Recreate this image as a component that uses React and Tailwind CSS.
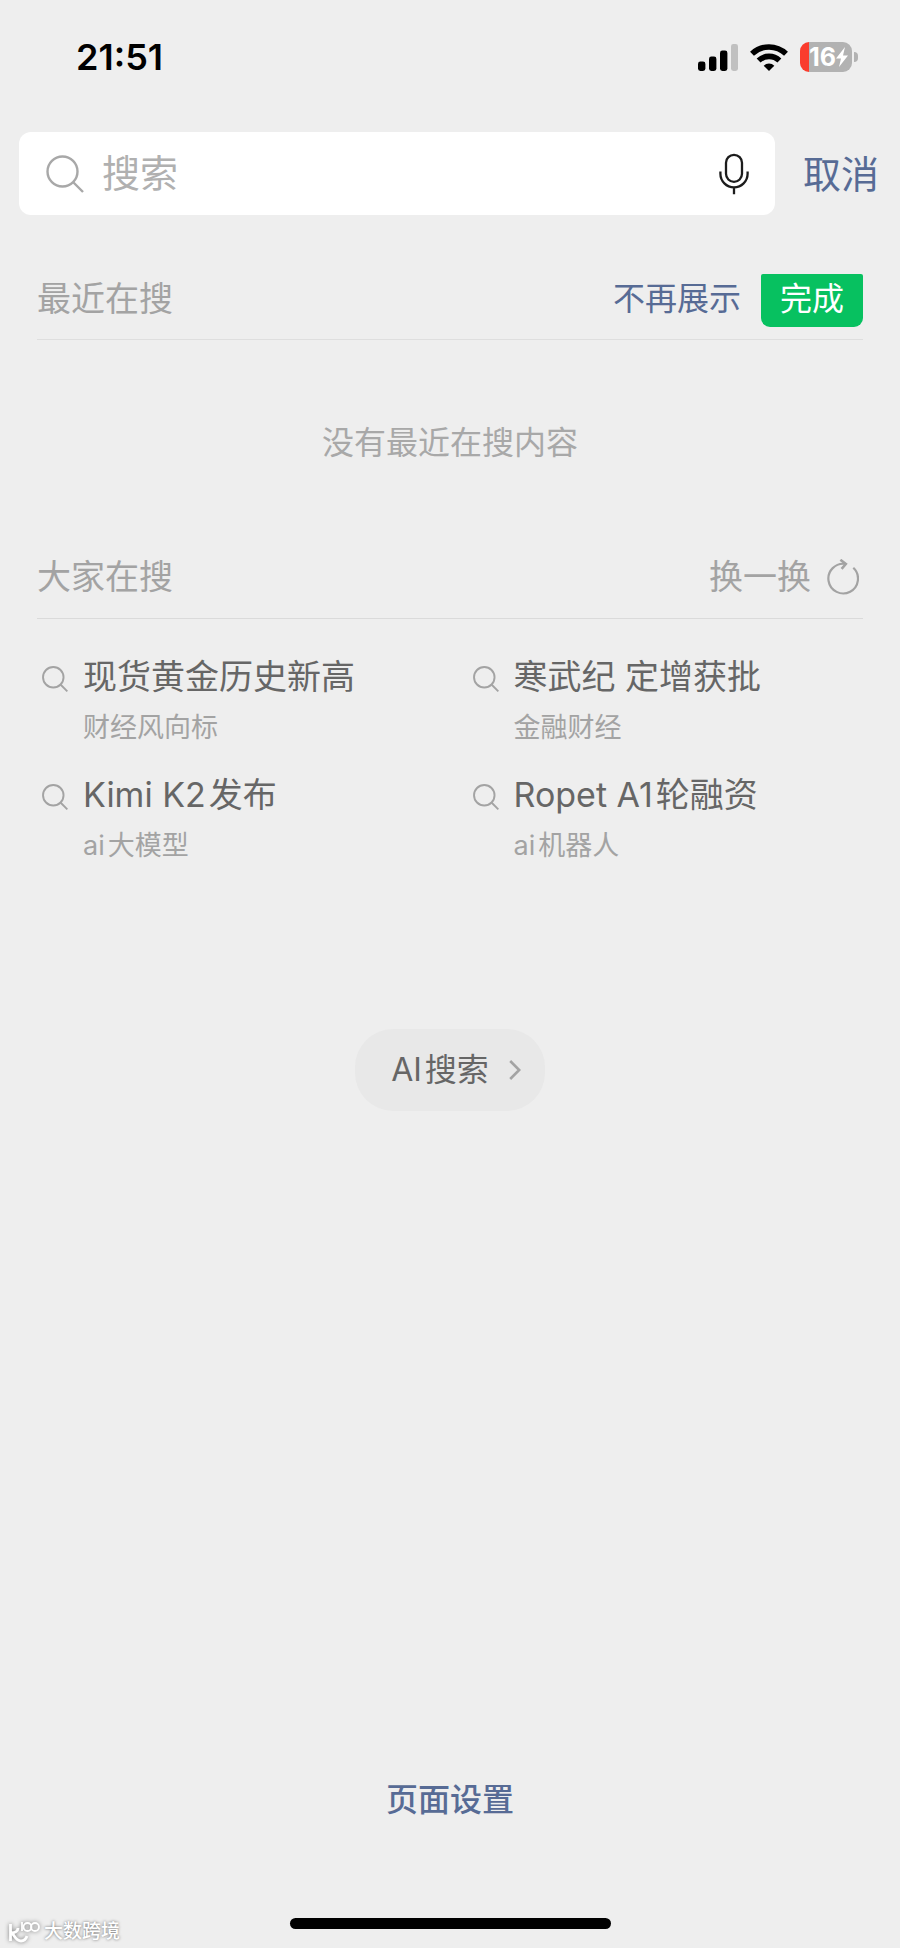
const trending = [
  { title: [['', '现货黄金历史新高']], tag: [['', '财经风向标']] },
  { title: [['', '寒武纪 定增获批']], tag: [['', '金融财经']] },
  { title: [['Kimi K2', '发布']], tag: [['ai', '大模型']] },
  { title: [['Ropet A1', '轮融资']], tag: [['ai', '机器人']] },
]

function Mixed({ parts }) {
  return parts.map(([latin, han]) => (
    <span key={han}>
      {latin && <span className="mr-[3px]">{latin}</span>}
      {han}
    </span>
  ))
}

function SearchIcon({ className, strokeWidth }) {
  return (
    <svg className={className} viewBox="0 0 38 38" fill="none" stroke="currentColor" strokeWidth={strokeWidth} aria-hidden="true">
      <circle cx="16.5" cy="16.5" r="15" />
      <path d="M27 27l10 10" />
    </svg>
  )
}

function StatusBar() {
  return (
    <div className="flex items-center justify-between pt-9 pl-[76px] pr-[42px]">
      <time className="text-[36px] leading-[42px] font-semibold text-black">21:51</time>
      <div className="flex items-center gap-3">
        <svg className="w-10 h-[27px]" viewBox="0 0 40 27" aria-hidden="true">
          <rect x="0" y="17.5" width="7.4" height="9.5" rx="2.4" />
          <rect x="11" y="12.5" width="7.4" height="14.5" rx="2.4" />
          <rect x="22" y="6.5" width="7.4" height="20.5" rx="2.4" />
          <rect x="33" y="0" width="7" height="27" rx="2.4" fill="#c0c0c0" />
        </svg>
        <svg className="w-[38px] h-[27px]" viewBox="0 0 38 27" fill="none" stroke="#000" strokeWidth="5.6" aria-hidden="true">
          <path d="M2 9.8a24.6 24.6 0 0 1 34 0" />
          <path d="M8.6 16.6a15 15 0 0 1 20.8 0" />
          <path d="M19 27l-5.3-5.3a7.6 7.6 0 0 1 10.6 0z" fill="#000" stroke="none" />
        </svg>
        <div className="flex items-center gap-[2px]">
          <div className="flex items-center justify-end w-[52px] h-[30px] pr-1 rounded-[9px] bg-linear-to-r from-[#fa3c2d] from-17% to-[#b2b2b2] to-17% text-white">
            <span className="text-[25px] leading-[30px] font-bold">16</span>
            <svg className="w-3 h-5" viewBox="0 0 12 20" fill="currentColor" aria-hidden="true">
              <path d="M9 0L0 11.4h5L3 20 12 8.4H7z" />
            </svg>
          </div>
          <span className="w-1 h-[10px] rounded-r-full bg-[#b2b2b2]" />
        </div>
      </div>
    </div>
  )
}

function SearchBar() {
  return (
    <form className="flex items-center gap-7 mt-[54px] pl-[19px] pr-[21px]" onSubmit={(e) => e.preventDefault()}>
      <div className="flex flex-1 items-center h-[83px] pl-[27px] pr-[26px] rounded-[12px] bg-white">
        <SearchIcon className="w-[38px] h-[38px] shrink-0 text-[#a8a8a8]" strokeWidth="2.4" />
        <input
          type="text"
          aria-label="搜索"
          placeholder="搜索"
          className="flex-1 min-w-0 h-[56px] ml-[18px] text-[38px] text-[#333] placeholder:text-[#b0b0b0] outline-none bg-transparent"
        />
        <button type="button" aria-label="语音输入">
          <svg className="w-[30px] h-[42px]" viewBox="0 0 30 42" fill="none" stroke="#1c1c1c" strokeWidth="2.3" aria-hidden="true">
            <rect x="7" y="1.8" width="16" height="27" rx="8" />
            <path d="M1.4 18.5v2.2a13.6 13.6 0 0 0 27.2 0v-2.2M15 34.3v7" />
          </svg>
        </button>
      </div>
      <button type="button" className="text-[38px] leading-[56px] text-[#576b95]">取消</button>
    </form>
  )
}

export default function App() {
  return (
    <main className="relative flex flex-col min-h-screen bg-[#eeeeee] font-['Inter','Noto_Sans_CJK_SC',sans-serif]">
      <StatusBar />
      <SearchBar />

      <section className="mt-[59px] mx-[37px]">
        <header className="flex items-start justify-between h-[66px] border-b border-[#dedede]">
          <h2 className="text-[34px] leading-[50px] text-[#a3a3a3]">最近在搜</h2>
          <div className="flex items-start gap-5 text-[32px] leading-[49px]">
            <button type="button" className="text-[#576b95]">不再展示</button>
            <button type="button" className="h-[53px] pb-1 px-[19px] rounded-t-[2px] rounded-b-[9px] bg-[#07c160] text-white">完成</button>
          </div>
        </header>
        <p className="mt-[79px] text-center text-[32px] leading-[48px] text-[#a8a8a8]">没有最近在搜内容</p>
      </section>

      <section className="mt-[85px] mx-[37px]">
        <header className="flex items-start justify-between h-[67px] border-b border-[#dadada]">
          <h2 className="text-[34px] leading-[50px] text-[#a3a3a3]">大家在搜</h2>
          <button type="button" className="flex items-center gap-4 pr-1 text-[34px] leading-[50px] text-[#a3a3a3]">
            换一换
            <svg className="w-8 h-9" viewBox="0 0 32 36" fill="none" stroke="currentColor" strokeWidth="2.2" aria-hidden="true">
              <path d="M26.3 8.8A14.8 14.8 0 1 1 18.6 5" />
              <path d="M13.4 0.8l5.4 4.2-4.2 4.8" strokeWidth="2.6" />
            </svg>
          </button>
        </header>
        <ul className="grid grid-cols-2 gap-x-10 gap-y-4 mt-[32px] pl-[5px]">
          {trending.map((item, i) => (
            <li key={i}>
              <a href="#" className="flex gap-[15px]">
                <SearchIcon className="w-[26px] h-[26px] mt-[15px] shrink-0 text-[#a3a3a3]" strokeWidth="2.8" />
                <span className="flex flex-col">
                  <span className="h-[52px] text-[34px] leading-[52px] text-[#666]"><Mixed parts={item.title} /></span>
                  <span className="h-[50px] text-[27px] leading-[50px] text-[#a3a3a3]"><Mixed parts={item.tag} /></span>
                </span>
              </a>
            </li>
          ))}
        </ul>
      </section>

      <button type="button" className="flex items-center self-center gap-5 h-[82px] mt-[158px] pl-9 pr-6 rounded-[38px] bg-[#e8e8e8] text-[32px] leading-[48px] text-[#666]">
        <span><span className="mr-[3px]">AI</span>搜索</span>
        <svg className="w-3 h-5" viewBox="0 0 12 20" fill="none" stroke="#a3a3a3" strokeWidth="2.6" aria-hidden="true">
          <path d="M1.2 1l9 9-9 9" />
        </svg>
      </button>

      <footer className="flex flex-col items-center mt-auto pb-[19px]">
        <a href="#" className="text-[32px] leading-[48px] font-medium text-[#576b95]">页面设置</a>
        <span className="w-[321px] h-[11px] mt-[94px] rounded-full bg-black" />
      </footer>

      <div className="absolute left-2 bottom-1 flex items-center gap-1 text-white">
        <svg className="w-8 h-6 drop-shadow-[0_0_2px_#777]" viewBox="0 0 32 24" fill="none" stroke="currentColor" strokeWidth="2.8" aria-hidden="true">
          <path d="M2.5 4v17M10 8c0 3-3 5-7 5 3 0 4 8 10 8 3 0 5-2 6-5" />
          <path d="M14 2v9" strokeWidth="1.8" />
          <circle cx="19.5" cy="7" r="4" strokeWidth="1.8" />
          <circle cx="27" cy="7" r="4" strokeWidth="1.8" />
        </svg>
        <span className="text-[19px] leading-6 font-medium text-shadow-[0_0_3px_#666]">大数跨境</span>
      </div>
    </main>
  )
}
